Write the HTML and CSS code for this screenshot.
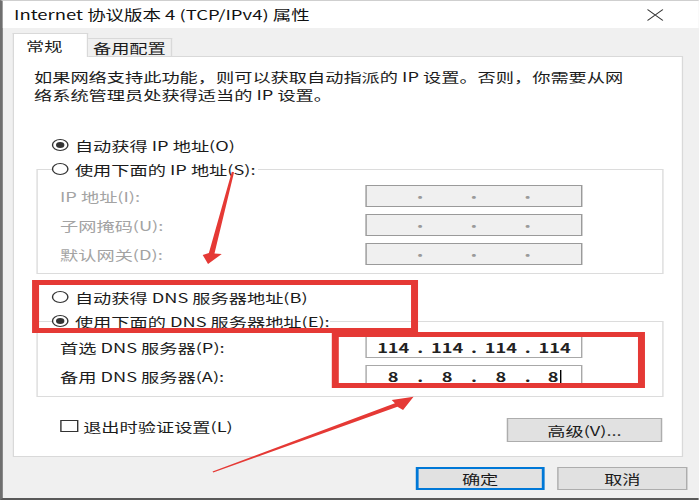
FILE: index.html
```html
<!DOCTYPE html>
<html lang="zh-CN">
<head>
<meta charset="utf-8">
<title>Internet 协议版本 4 (TCP/IPv4) 属性</title>
<link rel="stylesheet" href="styles.css">
</head>
<body>
<div class="dlg">
  <div class="titlebar">
    <span class="title">Internet 协议版本 4 (TCP/IPv4) 属性</span>
    <svg class="close" viewBox="0 0 12 12"><path d="M0.5 0.5 L11.5 11.5 M11.5 0.5 L0.5 11.5" stroke="#333" stroke-width="1" fill="none"/></svg>
  </div>
  <div class="body">
    <div class="tabs">
      <div class="tab active">常规</div>
      <div class="tab alt">备用配置</div>
    </div>
    <div class="panel">
      <p class="intro">如果网络支持此功能，则可以获取自动指派的 IP 设置。否则，你需要从网<br>络系统管理员处获得适当的 IP 设置。</p>
      <div class="opt first"><span class="radio on"></span><span>自动获得 IP 地址(O)</span></div>
      <fieldset class="group">
        <legend class="opt"><span class="radio"></span><span>使用下面的 IP 地址(S):</span></legend>
        <div class="rows iprows">
          <div class="row dis"><span class="lbl">IP 地址(I):</span><div class="ip off"><span class="seg"></span><span class="dot">·</span><span class="seg"></span><span class="dot">·</span><span class="seg"></span><span class="dot">·</span><span class="seg"></span></div></div>
          <div class="row dis"><span class="lbl">子网掩码(U):</span><div class="ip off"><span class="seg"></span><span class="dot">·</span><span class="seg"></span><span class="dot">·</span><span class="seg"></span><span class="dot">·</span><span class="seg"></span></div></div>
          <div class="row dis"><span class="lbl">默认网关(D):</span><div class="ip off"><span class="seg"></span><span class="dot">·</span><span class="seg"></span><span class="dot">·</span><span class="seg"></span><span class="dot">·</span><span class="seg"></span></div></div>
        </div>
      </fieldset>
      <div class="opt dns1"><span class="radio"></span><span>自动获得 DNS 服务器地址(B)</span></div>
      <fieldset class="group">
        <legend class="opt"><span class="radio on"></span><span>使用下面的 DNS 服务器地址(E):</span></legend>
        <div class="rows dnsrows">
          <div class="row"><span class="lbl">首选 DNS 服务器(P):</span><div class="ip val"><span class="seg">114</span><span class="dot">.</span><span class="seg">114</span><span class="dot">.</span><span class="seg">114</span><span class="dot">.</span><span class="seg">114</span></div></div>
          <div class="row"><span class="lbl">备用 DNS 服务器(A):</span><div class="ip val"><span class="seg">8</span><span class="dot">.</span><span class="seg">8</span><span class="dot">.</span><span class="seg">8</span><span class="dot">.</span><span class="seg">8<span class="caret"></span></span></div></div>
        </div>
      </fieldset>
      <div class="foot">
        <div class="check"><span class="box"></span><span>退出时验证设置(L)</span></div>
        <button class="btn adv">高级(V)...</button>
      </div>
    </div>
    <div class="actions">
      <button class="btn ok">确定</button>
      <button class="btn">取消</button>
    </div>
  </div>
  <svg class="annot" viewBox="0 0 499.29 500" preserveAspectRatio="none">
    <rect x="25.4" y="282.5" width="270.7" height="48" fill="none" stroke="#e53935" stroke-width="5"/>
    <rect x="239.5" y="334.5" width="218.7" height="51" fill="none" stroke="#e53935" stroke-width="5"/>
    <polygon points="165.6,171.8 149.2,253 144.8,255 148.6,264 158.4,254 153.2,253.5 167.2,172.2" fill="#e53935"/>
    <polygon points="151.8,471.5 282.1,403.2 279.8,400 295.4,396.7 287.9,410 283.9,406.8 152.3,472.5" fill="#e53935"/>
  </svg>
</div>
</body>
</html>
```

FILE: styles.css
```css
html, body {
  margin: 0;
  padding: 0;
  width: 699px;
  height: 500px;
  overflow: hidden;
  background: #f0f0f0;
}
body {
  font-family: "Noto Sans CJK SC", "Microsoft YaHei", sans-serif;
  font-size: 13px;
  color: #1b1b1b;
}
.dlg {
  position: relative;
  width: 499.29px;
  height: 500px;
  box-sizing: border-box;
  transform: scaleX(1.4);
  transform-origin: 0 0;
  display: flex;
  flex-direction: column;
  border-left: 2px solid #6f6f6f;
  border-bottom: 2px solid #595959;
  border-top: 1px solid #cfcfcf;
  background: #f0f0f0;
}
.titlebar {
  flex: none;
  height: 27px;
  background: #fff;
  display: flex;
  align-items: center;
  padding: 0 25px 0 8px;
}
.title {
  flex: 1;
  font-size: 13.2px;
  color: #111;
}
.close {
  width: 12px;
  height: 12px;
}
.body {
  flex: 1;
  padding-top: 5px;
}
.tabs {
  display: flex;
  align-items: flex-start;
  height: 23px;
  margin-left: 6.6px;
  position: relative;
  z-index: 1;
}
.tab {
  box-sizing: border-box;
  border: 1px solid #d9d9d9;
  border-bottom: none;
}
.tab.active {
  width: 54.3px;
  height: 24px;
  background: #fff;
  padding-left: 9px;
  line-height: 23px;
}
.tab.alt {
  width: 60px;
  height: 18px;
  margin-top: 5px;
  border-left: none;
  text-align: center;
  line-height: 17px;
  background: #f0f0f0;
}
.panel {
  margin-left: 6.6px;
  width: 479.3px;
  height: 401px;
  box-sizing: border-box;
  background: #fff;
  border: 1px solid #d9d9d9;
  padding-top: 11px;
}
.intro {
  margin: 0 0 0 14.7px;
  line-height: 18px;
  white-space: nowrap;
}
.opt {
  display: flex;
  align-items: center;
  gap: 4px;
  height: 24px;
}
.opt.first {
  margin: 29px 0 0 27.9px;
}
.opt.dns1 {
  margin: 11px 0 0 27.9px;
}
.radio {
  width: 12px;
  height: 12px;
  box-sizing: border-box;
  border: 1px solid #333;
  border-radius: 50%;
  display: inline-flex;
  align-items: center;
  justify-content: center;
  flex: none;
}
.radio.on::after {
  content: "";
  width: 6px;
  height: 6px;
  border-radius: 50%;
  background: #333;
}
fieldset.group {
  margin: 0 0 0 16.1px;
  padding: 0;
  width: 447.9px;
  min-width: 0;
  box-sizing: border-box;
  border: 1px solid #dcdcdc;
}
legend.opt {
  margin-left: 10.8px;
  padding: 0 1px 0 0;
}
.rows {
  display: grid;
  row-gap: 7px;
  padding-left: 16.2px;
}
.iprows {
  padding-top: 4px;
  padding-bottom: 8px;
}
.dnsrows {
  padding-top: 3px;
  padding-bottom: 9px;
}
.row {
  display: grid;
  grid-template-columns: 217.8px 155.7px;
  align-items: center;
  height: 22px;
}
.row.dis .lbl {
  color: #a3a3a3;
}
.ip {
  height: 22px;
  box-sizing: border-box;
  border: 1px solid #a8a8a8;
  background: #fff;
  display: flex;
  align-items: center;
  color: #111;
}
.ip.val {
  font-weight: 600;
  color: #222;
}
.ip.off {
  background: #f0f0f0;
  border-color: #9a9a9a;
}
.seg {
  flex: 1;
  text-align: center;
}
.dot {
  width: 0;
  display: flex;
  justify-content: center;
}
.ip.off .dot {
  color: #9a9a9a;
}
.caret {
  display: inline-block;
  width: 1px;
  height: 15px;
  margin-left: 1px;
  background: #000;
  vertical-align: middle;
}
.foot {
  display: flex;
  align-items: flex-start;
  justify-content: space-between;
  margin-top: 17px;
  padding: 0 14px 0 33.3px;
}
.check {
  display: flex;
  align-items: center;
  gap: 3px;
  height: 24px;
}
.box {
  width: 13.5px;
  height: 12px;
  box-sizing: border-box;
  border: 1px solid #333;
}
.btn {
  font: inherit;
  color: inherit;
  background: #e1e1e1;
  border: 1px solid #adadad;
  padding: 0;
  box-sizing: border-box;
  height: 24px;
}
.adv {
  width: 110.9px;
  margin-top: 4px;
}
.actions {
  display: flex;
  justify-content: flex-end;
  gap: 9.3px;
  margin-top: 10px;
  padding-right: 8.6px;
}
.actions .btn {
  width: 92.3px;
  height: 23px;
}
.btn.ok {
  border: 2px solid #0078d7;
}
.annot {
  position: absolute;
  left: -2px;
  top: -1px;
  width: 499.29px;
  height: 500px;
  pointer-events: none;
}
```
